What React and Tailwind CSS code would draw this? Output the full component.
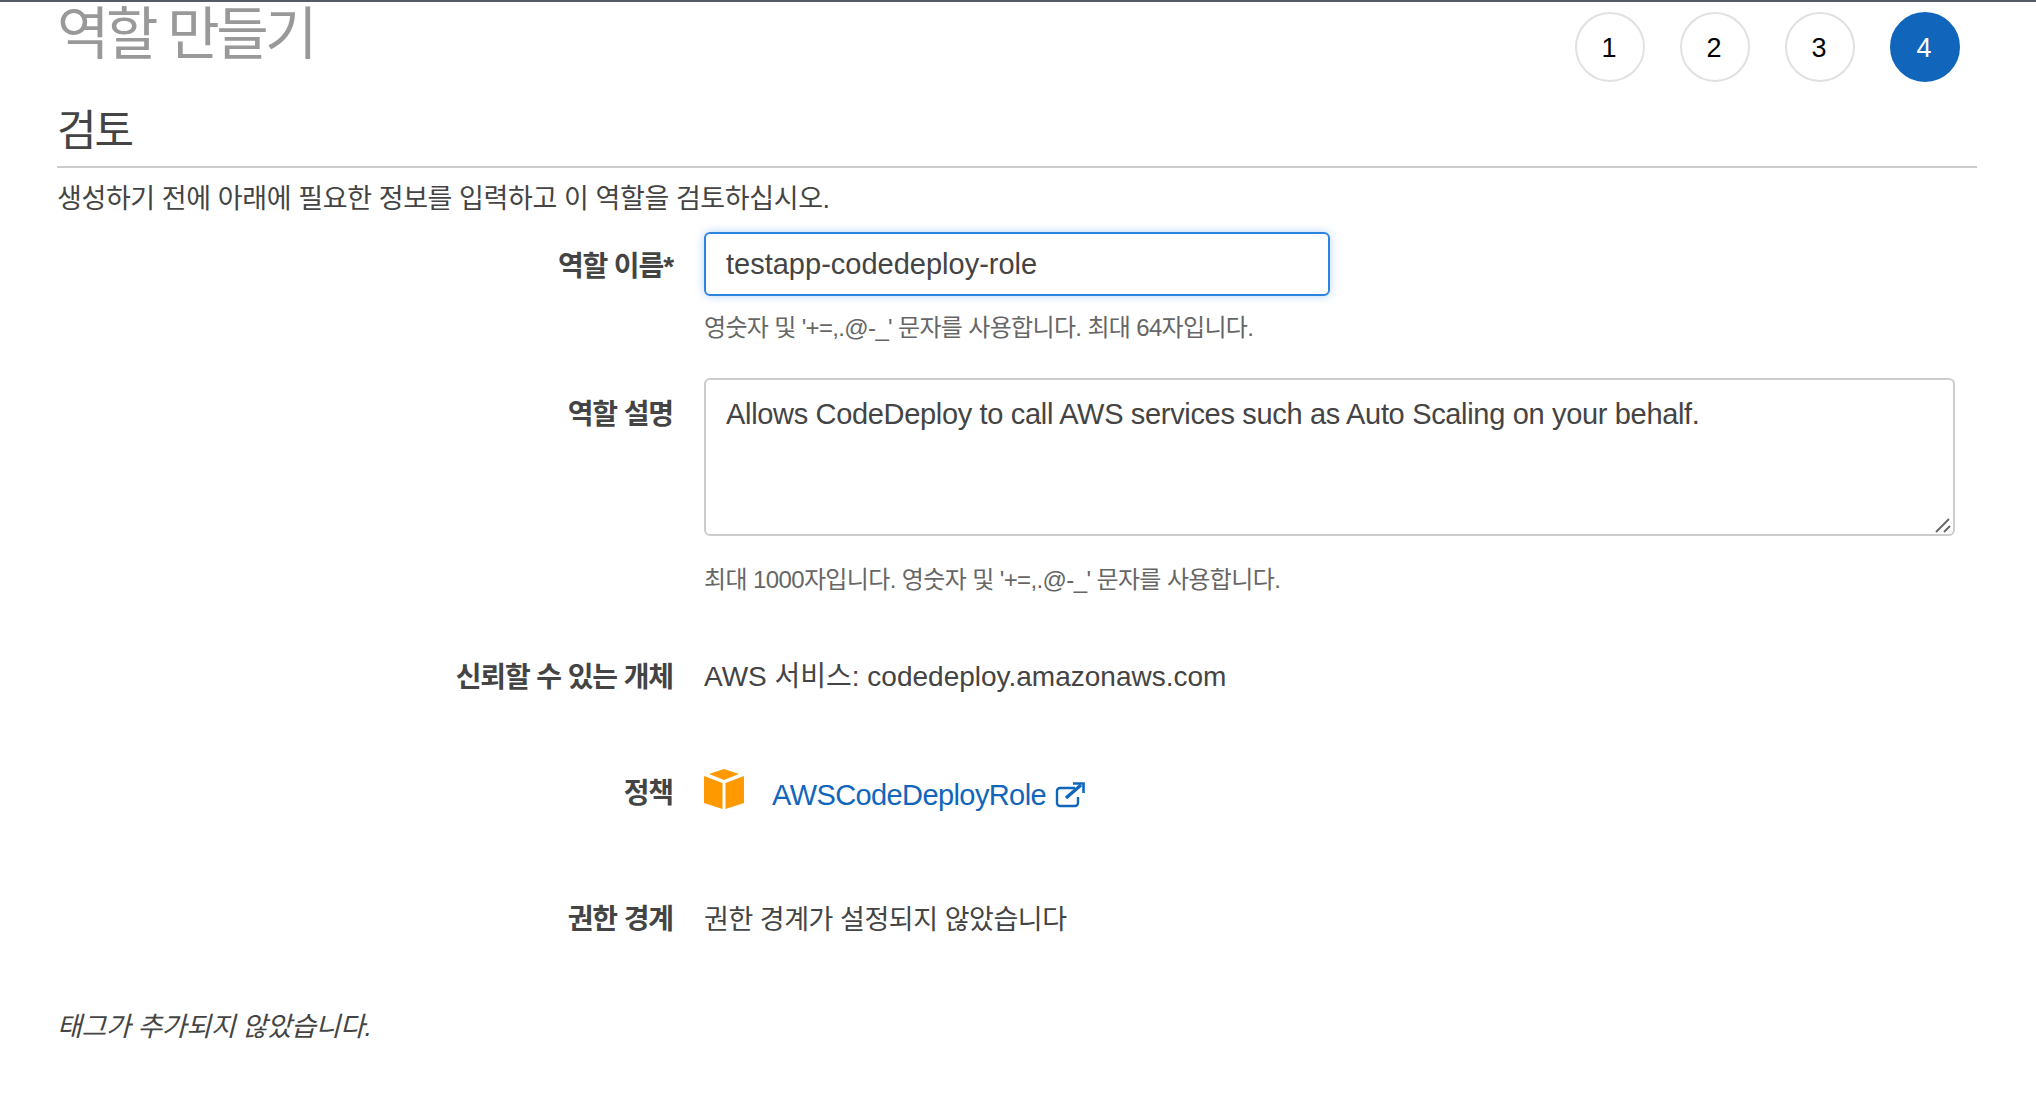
import React from "react";

const FONT = "font-['Liberation_Sans','Noto_Sans_CJK_KR',sans-serif]";

function Step({ n, active }) {
    return (
        <div
            className={`w-[70px] h-[70px] rounded-full flex items-center justify-center text-[27px] pt-[2px] pr-[2px] border-2 ${
                active ? "bg-[#1166bb] border-[#1166bb] text-white" : "bg-white border-[#e1e1e1] text-black"
            }`}
        >
            {n}
        </div>
    );
}

function Row({ label, className, labelClass, children }) {
    return (
        <div className={`flex ${className}`}>
            <div className={`w-[616px] shrink-0 text-right font-bold text-[28px] leading-[36px] tracking-[-1.1px] text-[#444] ${labelClass}`}>
                {label}
            </div>
            <div className="ml-[31px] flex-1 min-w-0">{children}</div>
        </div>
    );
}

function CubeIcon() {
    return (
        <svg width="40" height="40" viewBox="0 0 40 40" className="-mt-[14px]">
            <path d="M20 0 L35 5 L20 11 L5 5 Z" fill="#ff9900" />
            <path d="M0 7 L18.5 14 V40 L0 34 Z" fill="#ff9900" />
            <path d="M40 7 L21.5 14 V40 L40 34 Z" fill="#ff9900" />
        </svg>
    );
}

function ExternalIcon() {
    return (
        <svg width="30" height="26" viewBox="0 0 30 26" fill="none" stroke="#1166bb" strokeWidth="2.4">
            <path d="M20 6 H5 a3 3 0 0 0 -3 3 V21 a3 3 0 0 0 3 3 H20 a3 3 0 0 0 3 -3 V15" />
            <path d="M11 16 L26 3" strokeWidth="3.4" />
            <path d="M18 1.5 H28.5 V11" strokeWidth="2.6" />
        </svg>
    );
}

export default function App() {
    return (
        <div className={`${FONT} w-[2036px] h-[1098px] bg-white overflow-hidden border-t-2 border-[#545b64] text-[#444]`}>
            <div className="pl-[57px] pr-[59px]">
                {/* Title and wizard steps */}
                <div className="flex justify-between items-start h-[108px]">
                    <h1 className="text-[57px] leading-[58px] mt-[3px] tracking-[-3.5px] text-[#999]">역할 만들기</h1>
                    <div className="flex gap-[35px] mt-[10px] mr-[17px]">
                        <Step n="1" />
                        <Step n="2" />
                        <Step n="3" />
                        <Step n="4" active />
                    </div>
                </div>

                <h2 className="text-[43px] leading-[50px] tracking-[-2px] -mt-[4px] pb-[3px] border-b-2 border-[#cccccc] h-[62px]">검토</h2>
                <p className="text-[27px] leading-[36px] tracking-[-0.4px] mt-[13px]">
                    생성하기 전에 아래에 필요한 정보를 입력하고 이 역할을 검토하십시오.
                </p>

                <Row label="역할 이름*" className="mt-[15px]" labelClass="pt-[17px]">
                    <input
                        readOnly
                        value="testapp-codedeploy-role"
                        className="block w-[626px] h-[64px] px-[20px] text-[29px] text-[#444] rounded-[6px] border-2 border-[#2d84e0] shadow-[0_0_10px_rgba(45,132,224,0.35)] outline-none"
                    />
                    <p className="text-[24px] leading-[32px] tracking-[-0.66px] text-[#666] mt-[16px]">
                        영숫자 및 '+=,.@-_' 문자를 사용합니다. 최대 64자입니다.
                    </p>
                </Row>

                <Row label="역할 설명" className="mt-[34px]" labelClass="pt-[19px]">
                    <div className="relative w-[1251px] h-[158px]">
                        <textarea
                            readOnly
                            value="Allows CodeDeploy to call AWS services such as Auto Scaling on your behalf."
                            className="block w-full h-full resize-none px-[20px] py-[16px] text-[29px] leading-[36px] tracking-[-0.33px] text-[#444] rounded-[6px] border-2 border-[#cccccc] outline-none"
                        />
                        {/* resize grip */}
                        <svg width="16" height="16" viewBox="0 0 16 16" className="absolute right-[4px] bottom-[3px]" stroke="#666" strokeWidth="2">
                            <path d="M1 15 L14 2" />
                            <path d="M9 15 L15 9" />
                        </svg>
                    </div>
                    <p className="text-[24px] leading-[32px] tracking-[-0.62px] text-[#666] mt-[28px]">
                        최대 1000자입니다. 영숫자 및 '+=,.@-_' 문자를 사용합니다.
                    </p>
                </Row>

                <Row label="신뢰할 수 있는 개체" className="mt-[63px]" labelClass="pt-[1px]">
                    <p className="text-[28px] leading-[36px]">AWS 서비스: codedeploy.amazonaws.com</p>
                </Row>

                <Row label="정책" className="mt-[80px]">
                    <div className="flex items-center h-[40px]">
                        <CubeIcon />
                        <a className="ml-[28px] text-[29px] text-[#1166bb] tracking-[-0.6px] -mt-[1px]">AWSCodeDeployRole</a>
                        <span className="ml-[9px] -mt-[2px]">
                            <ExternalIcon />
                        </span>
                    </div>
                </Row>

                <Row label="권한 경계" className="mt-[86px]">
                    <p className="text-[27px] leading-[36px] tracking-[-0.45px]">권한 경계가 설정되지 않았습니다</p>
                </Row>

                <p className="text-[27px] leading-[36px] tracking-[-0.4px] italic mt-[71px]">태그가 추가되지 않았습니다.</p>
            </div>
        </div>
    );
}
